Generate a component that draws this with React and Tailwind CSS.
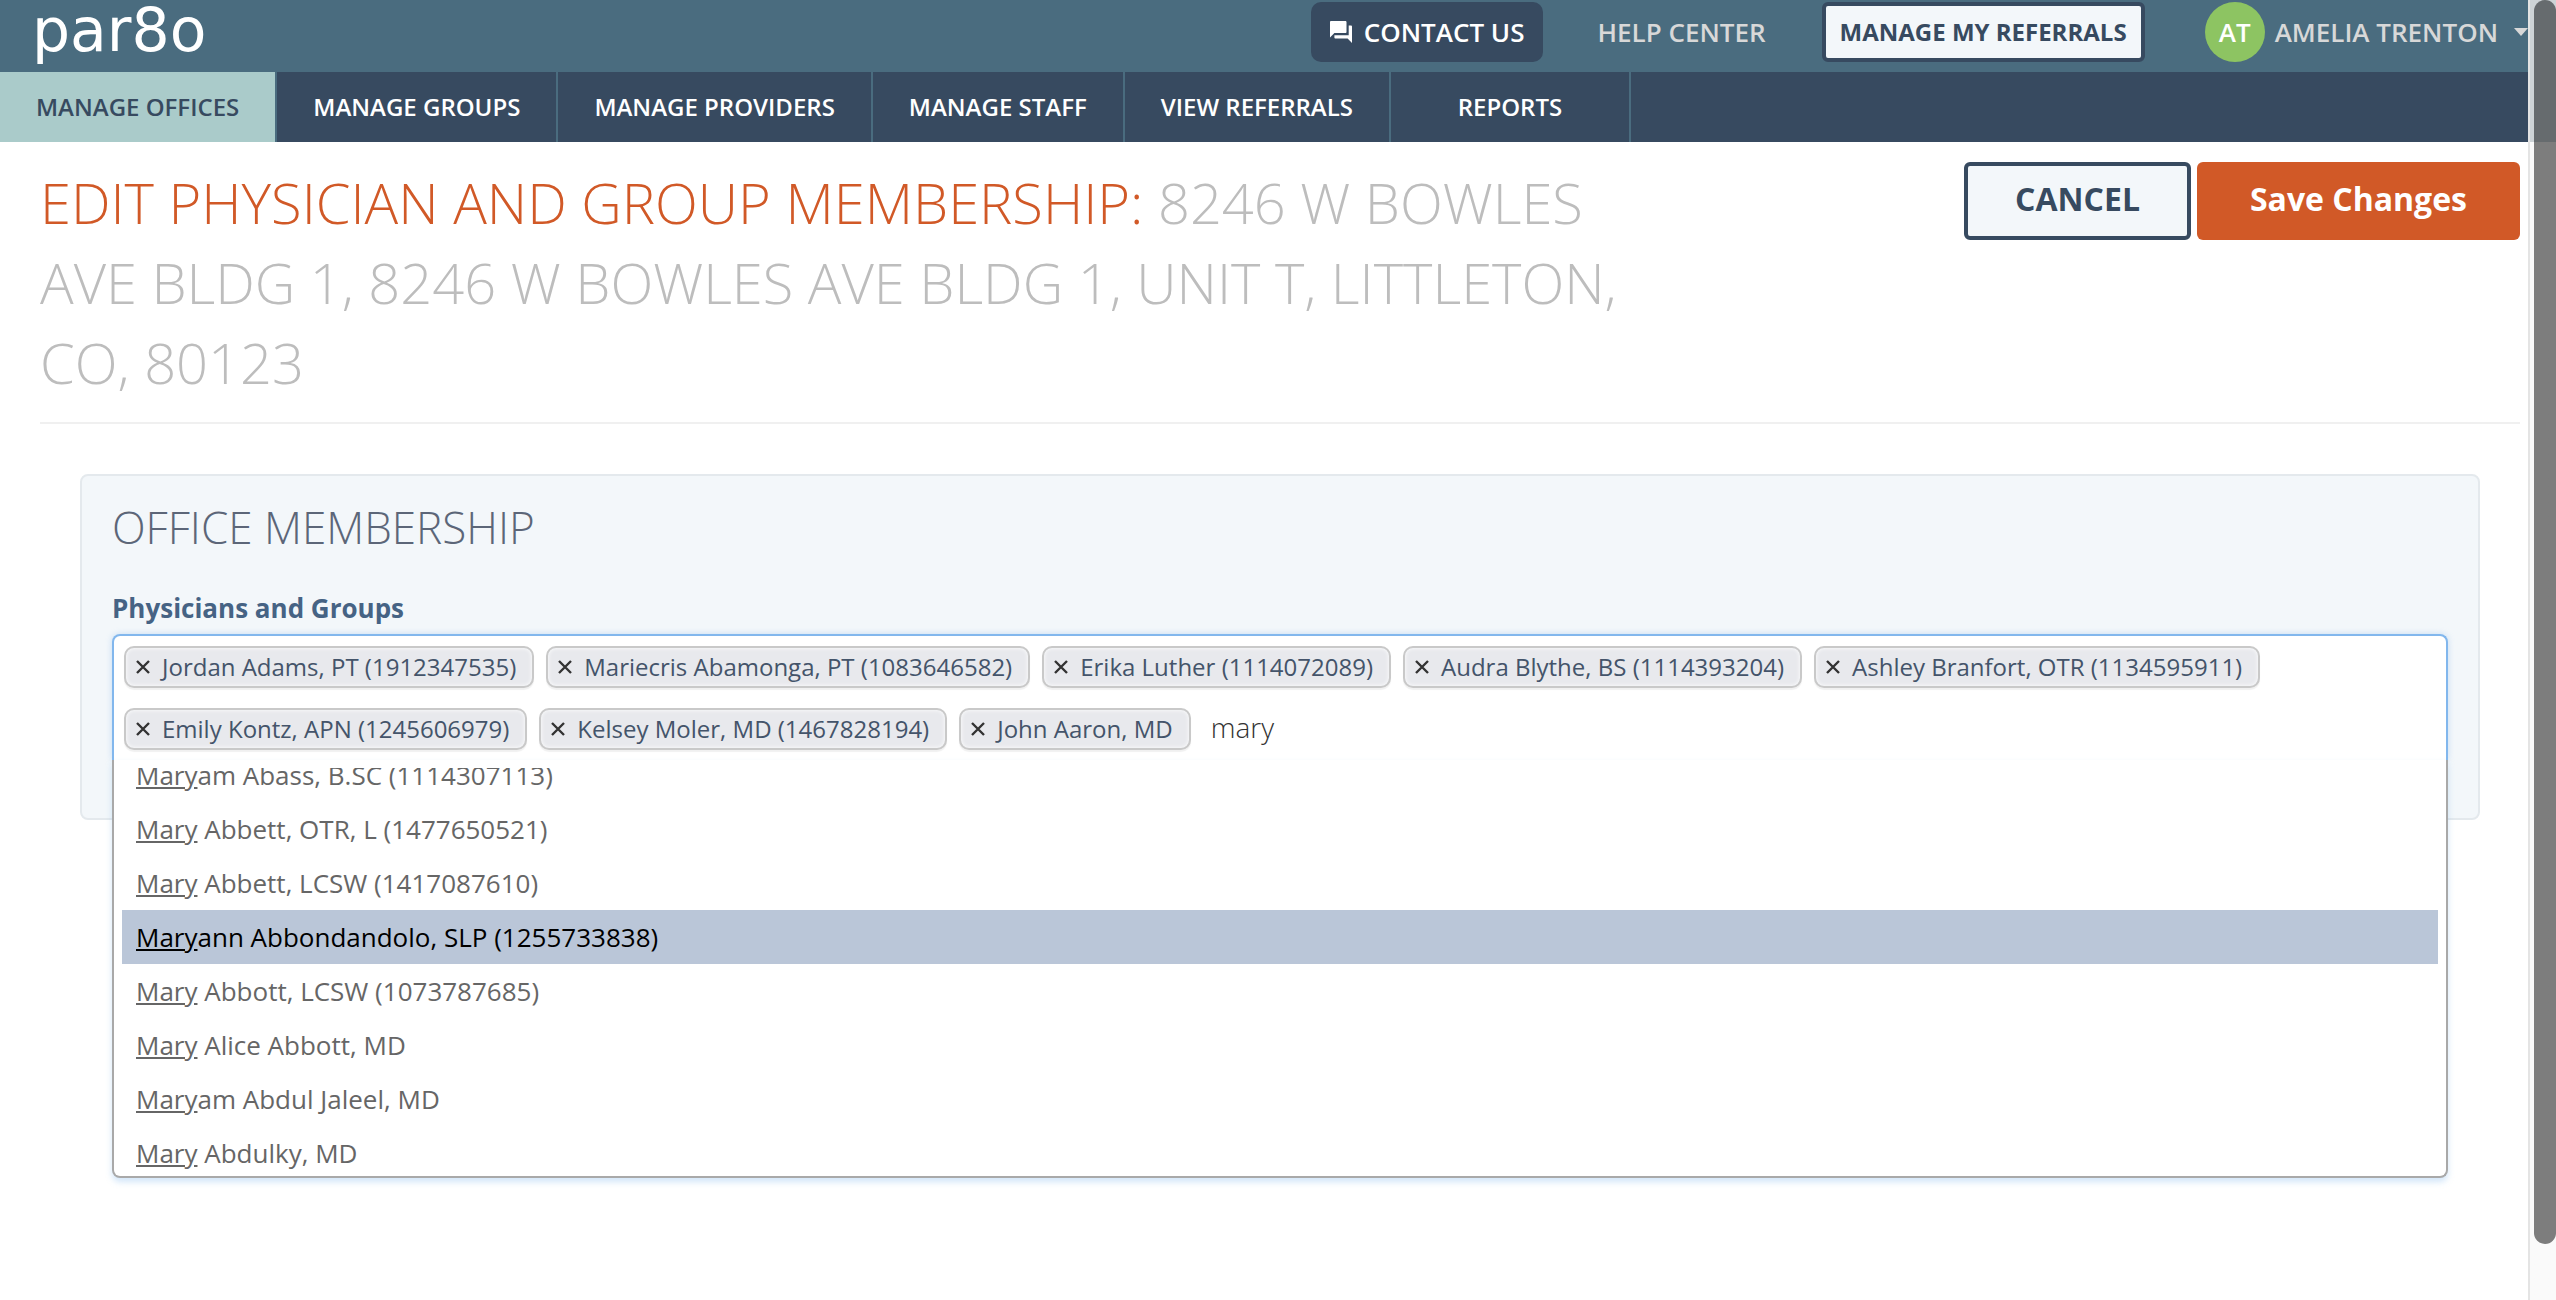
import { useState } from "react";

const navItems = [
  { label: "MANAGE OFFICES", active: true },
  { label: "MANAGE GROUPS" },
  { label: "MANAGE PROVIDERS" },
  { label: "MANAGE STAFF" },
  { label: "VIEW REFERRALS" },
  { label: "REPORTS" },
];

const members = [
  "Jordan Adams, PT (1912347535)",
  "Mariecris Abamonga, PT (1083646582)",
  "Erika Luther (1114072089)",
  "Audra Blythe, BS (1114393204)",
  "Ashley Branfort, OTR (1134595911)",
  "Emily Kontz, APN (1245606979)",
  "Kelsey Moler, MD (1467828194)",
  "John Aaron, MD",
];

const matches = [
  "am Abass, B.SC (1114307113)",
  " Abbett, OTR, L (1477650521)",
  " Abbett, LCSW (1417087610)",
  "ann Abbondandolo, SLP (1255733838)",
  " Abbott, LCSW (1073787685)",
  " Alice Abbott, MD",
  "am Abdul Jaleel, MD",
  " Abdulky, MD",
];

function ChatIcon() {
  return (
    <svg viewBox="2 2 20 20" className="size-[22px] fill-current" aria-hidden="true">
      <path d="M21 6h-2v9H6v2c0 .55.45 1 1 1h11l4 4V7c0-.55-.45-1-1-1zm-4 6V3c0-.55-.45-1-1-1H3c-.55 0-1 .45-1 1v14l4-4h10c.55 0 1-.45 1-1z" />
    </svg>
  );
}

function CloseIcon() {
  return (
    <svg viewBox="0 0 14 14" className="size-3.5 stroke-[#333333]" strokeWidth="2.4" aria-hidden="true">
      <path d="M1 1l12 12M13 1l-12 12" />
    </svg>
  );
}

function TopBar() {
  return (
    <header className="flex h-18 items-start justify-between bg-[#4a6c7f] pl-8">
      <a href="#home" className="font-['DejaVu_Sans',sans-serif] text-[60px] leading-[60px] text-white">
        par8o
      </a>
      <div className="flex h-16 items-center text-[26px] font-semibold text-[#d8d8d8]">
        <button type="button" className="flex h-15 items-center gap-3 rounded-[10px] bg-[#374a60] px-[19px] text-white">
          <ChatIcon />
          CONTACT US
        </button>
        <a href="#help" className="ml-[54px]">HELP CENTER</a>
        <button type="button" className="ml-[56px] h-15 rounded-md border-4 border-[#374a60] bg-[#f3f7fa] px-3.5 text-2xl font-bold text-[#374a60]">
          MANAGE MY REFERRALS
        </button>
        <button type="button" className="ml-[60px] flex items-center">
          <span className="flex size-15 items-center justify-center rounded-full bg-[#8dc462] text-white">AT</span>
          <span className="ml-2.5">AMELIA TRENTON</span>
          <svg viewBox="0 0 14 8" className="ml-4 h-2 w-3.5 fill-current" aria-hidden="true">
            <path d="M0 0h14L7 8z" />
          </svg>
        </button>
      </div>
    </header>
  );
}

function MainNav() {
  return (
    <nav className="flex h-[70px] bg-[#374a60] text-2xl font-semibold">
      {navItems.map((item) => (
        <a
          key={item.label}
          href="#nav"
          aria-current={item.active ? "page" : undefined}
          className={
            "flex min-w-60 items-center justify-center border-r-2 border-[#4a6c7f] px-9 " +
            (item.active ? "bg-[#aacbca] text-[#374a60]" : "text-white")
          }
        >
          {item.label}
        </a>
      ))}
    </nav>
  );
}

function Membership() {
  const [query, setQuery] = useState("mary");
  return (
    <section className="mx-10 mt-[50px] h-[346px] rounded-lg border-2 border-[#e4e9ed] bg-[#f3f7fa] px-[30px] pt-5">
      <h2 className="text-[44px] font-light leading-[62px] text-[#5c6678]">OFFICE MEMBERSHIP</h2>
      <label htmlFor="members" className="mt-[30px] block text-[26px] font-bold leading-10 text-[#466384]">
        Physicians and Groups
      </label>
      <div className="relative mt-1.5 rounded-t-lg border-2 border-b-0 border-[#82b7ed] bg-white pb-2.5 pl-2.5 pt-2.5 shadow-[0_0_6px_rgba(130,183,237,0.4)]">
        <div className="flex flex-wrap gap-x-3 gap-y-5">
          {members.map((name) => (
            <span
              key={name}
              className="flex h-[42px] items-center gap-3 rounded-[10px] border-2 border-[#c9c9c9] bg-[#e8e9ed] pl-2.5 pr-4 text-2xl text-[#44546a] shadow-[0_2px_1px_rgba(0,0,0,0.06),inset_0_0_4px_#ffffff]"
            >
              <button type="button" aria-label={"Remove " + name}>
                <CloseIcon />
              </button>
              {name}
            </span>
          ))}
          <input
            id="members"
            value={query}
            onChange={(e) => setQuery(e.target.value)}
            className="ml-2 h-[42px] w-40 bg-transparent pb-1 text-[28px] font-light text-[#333333] outline-none"
          />
        </div>
        <div className="absolute -inset-x-0.5 top-full rounded-b-lg border-2 border-t-0 border-[#a9a9a9] bg-white px-2 pt-2 shadow-[0_4px_6px_rgba(130,183,237,0.35)]">
          <ul className="h-[408px] overflow-hidden text-[26px] leading-[54px] text-[#666666]">
            {matches.map((rest, i) => (
              <li
                key={rest}
                className={"h-[54px] px-3.5 first:-mt-5 " + (i === 3 ? "bg-[#bac6d8] text-black" : "")}
              >
                <span className="underline">Mary</span>
                {rest}
              </li>
            ))}
          </ul>
        </div>
      </div>
    </section>
  );
}

export default function App() {
  return (
    <div className="flex min-h-screen bg-white font-['Open_Sans',sans-serif]">
      <div className="min-w-0 flex-1">
        <TopBar />
        <MainNav />
        <main className="pl-10 pr-2">
          <div className="flex items-start justify-between border-b-2 border-[#f0f0f0] pb-5 pt-5">
            <h1 className="w-2/3 pr-10 text-[56px] font-light leading-20 text-[#d15927]">
              EDIT PHYSICIAN AND GROUP MEMBERSHIP:{" "}
              <span className="text-[#bdbdbd]">
                8246 W BOWLES AVE BLDG 1, 8246 W BOWLES AVE BLDG 1, UNIT T, LITTLETON, CO, 80123
              </span>
            </h1>
            <div className="flex gap-1.5 text-[32px] font-bold">
              <button type="button" className="h-[78px] rounded-md border-4 border-[#374a60] bg-[#f3f7fa] px-[47px] pb-1 text-[#374a60]">
                CANCEL
              </button>
              <button type="button" className="h-[78px] rounded-md bg-[#d15927] px-[53px] pb-1 text-white">
                Save Changes
              </button>
            </div>
          </div>
          <Membership />
        </main>
      </div>
      <div className="w-7 border-l-2 border-[#e4e4e4] bg-linear-to-b from-[#cdd3d6] from-[142px] to-[#fafafa] to-[142px] pl-1">
        <div className="h-[1244px] rounded-full bg-linear-to-b from-[#666b6e] from-[142px] to-[#7d7d7d] to-[142px]" />
      </div>
    </div>
  );
}
